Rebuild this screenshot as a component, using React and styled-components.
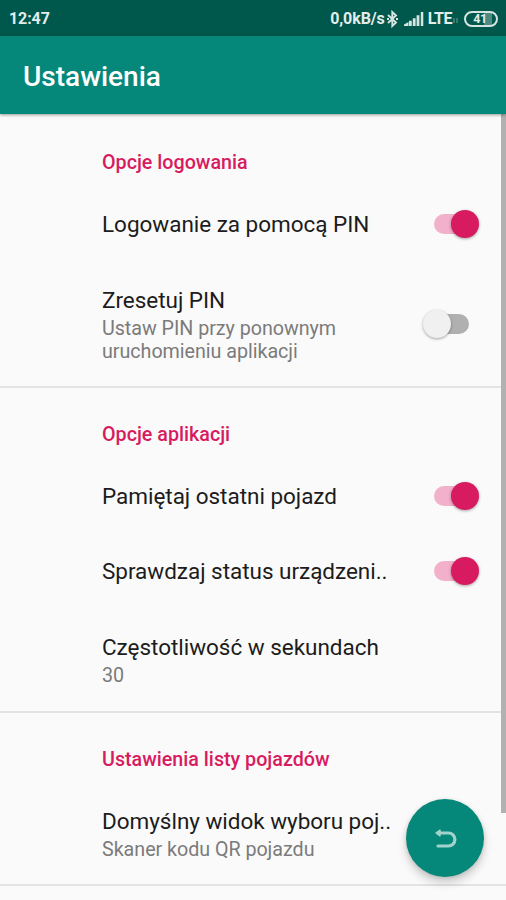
import React from 'react'
import styled, { createGlobalStyle } from "styled-components";

const GlobalStyle = createGlobalStyle`
    * {
        box-sizing: border-box;
    }

    body {
        margin: 0;
        background-color: #fafafa;
        font-family: Roboto, "Noto Sans", sans-serif;
    }
`;

const Screen = styled.div`
    position: relative;
    display: flex;
    flex-direction: column;
    width: 506px;
    height: 900px;
    overflow: hidden;
    background-color: #fafafa;
`;

const StatusBar = styled.div`
    flex: none;
    display: flex;
    align-items: center;
    justify-content: space-between;
    height: 36px;
    padding: 1px 8px 0 9px;
    background-color: #00574b;
    color: #e3eeec;
    font-size: 16px;
    font-weight: 700;
`;

const Clock = styled.span`
    letter-spacing: -0.1px;
`;

const StatusIcons = styled.div`
    display: flex;
    align-items: center;
`;

const Speed = styled.span`
    letter-spacing: -0.1px;
`;

const Network = styled.span`
    margin-left: 3px;
    letter-spacing: -0.5px;
`;

const Battery = styled.div`
    display: flex;
    align-items: center;
    justify-content: center;
    width: 34px;
    height: 16px;
    margin-left: 5px;
    padding-right: 2px;
    border: 2px solid #d5e5e2;
    border-radius: 8px;
    background: linear-gradient(to right, transparent 60%, #4f8a80 60%, #4f8a80 86%, transparent 86%);
    font-size: 12.5px;
    letter-spacing: -0.4px;
`;

const AppBar = styled.header`
    position: relative;
    flex: none;
    display: flex;
    align-items: center;
    height: 78px;
    padding-left: 23px;
    background-color: #058879;
    box-shadow: 0 1px 3px rgba(0, 0, 0, 0.4);
    z-index: 1;
`;

const Title = styled.h1`
    margin: 0;
    margin-top: 3px;
    color: white;
    font-size: 28px;
    font-weight: 500;
    letter-spacing: 0;
`;

const Content = styled.main`
    flex: 1;
    min-height: 0;
    padding-top: 2px;
    overflow: hidden;
`;

const Section = styled.section`
    height: ${props => props.$height}px;
    border-bottom: 2px solid #e3e3e3;
`;

const Category = styled.h2`
    height: 71px;
    margin: 0;
    padding: 35px 0 0 102px;
    color: #d81b60;
    font-size: 19.7px;
    line-height: 24px;
    font-weight: 500;
    letter-spacing: 0;
`;

const Preference = styled.div`
    display: flex;
    align-items: center;
    justify-content: space-between;
    height: ${props => props.$height || 75.3}px;
    padding: 0 27px 0 102px;
`;

const PreferenceName = styled.div`
    margin-bottom: 1px;
    color: #1c1c1c;
    font-size: 22.5px;
    line-height: 30px;
    letter-spacing: -0.03px;
    white-space: nowrap;
`;

const Summary = styled.div`
    margin-top: 2px;
    color: #7b7b7b;
    font-size: 19.7px;
    line-height: 23.5px;
    letter-spacing: -0.03px;
    white-space: pre-line;
`;

const Switch = styled.div`
    position: relative;
    flex: none;
    display: flex;
    align-items: center;
    justify-content: ${props => props.$on ? 'flex-end' : 'flex-start'};
    width: 56px;
    height: 28px;
    margin-top: -1px;

    &::before {
        content: '';
        position: absolute;
        left: 11px;
        top: 4px;
        width: 35px;
        height: 20px;
        border-radius: 10px;
        background-color: ${props => props.$on ? '#f2b0ca' : '#b0b0b0'};
    }
`;

const Thumb = styled.div`
    position: relative;
    width: 28px;
    height: 28px;
    border-radius: 50%;
    background-color: ${props => props.$on ? '#d81b60' : '#f0f0f0'};
    box-shadow: 0 1px 3px rgba(0, 0, 0, 0.35);
`;

const ScrollBar = styled.div`
    position: absolute;
    top: 114px;
    right: 0;
    width: 5px;
    height: 699px;
    background-color: #b1b1b1;
`;

const BackButton = styled.button`
    position: absolute;
    left: 406px;
    top: 799px;
    display: flex;
    align-items: center;
    justify-content: center;
    width: 78px;
    height: 78px;
    padding: 2px 0 0 1px;
    border: none;
    border-radius: 50%;
    background-color: #058879;
    box-shadow: 0 6px 10px rgba(0, 0, 0, 0.18), 0 1px 4px rgba(0, 0, 0, 0.12);
`;

const sections = [
  {
    name: 'Opcje logowania',
    height: 272,
    items: [
      { name: 'Logowanie za pomocą PIN', on: true },
      { name: 'Zresetuj PIN', summary: 'Ustaw PIN przy ponownym\nuruchomieniu aplikacji', on: false, height: 124 },
    ],
  },
  {
    name: 'Opcje aplikacji',
    height: 324.5,
    items: [
      { name: 'Pamiętaj ostatni pojazd', on: true },
      { name: 'Sprawdzaj status urządzeni..', on: true },
      { name: 'Częstotliwość w sekundach', summary: '30', height: 101 },
    ],
  },
  {
    name: 'Ustawienia listy pojazdów',
    height: 173.5,
    items: [
      { name: 'Domyślny widok wyboru poj..', summary: 'Skaner kodu QR pojazdu', height: 101 },
    ],
  },
];

const BluetoothGlyph = styled.svg`
    margin: 0 5px 0 1px;
`;

const BluetoothIcon = () => (
  <BluetoothGlyph width="13" height="18" viewBox="0 0 13 18" fill="none" stroke="#d5e5e2" strokeWidth="1.9">
    <path d="M2 5 L10 12.5 L6.3 16 V2 L10 5.5 L2 13" />
    <path d="M1 9 H3 M10 9 H12" />
  </BluetoothGlyph>
);

const SignalIcon = () => (
  <svg width="21" height="16" viewBox="0 0 21 16" fill="#d5e5e2">
    <path d="M0 15 V13.5 L4.5 11 V15 Z M5 9.8 H7.8 V15 H5 Z M8.8 7.3 H11.6 V15 H8.8 Z M12.6 4.3 H15.4 V15 H12.6 Z M16.8 1 H19.3 V15 H16.8 Z" />
  </svg>
);

const DataIcon = () => (
  <svg width="7" height="8" viewBox="0 0 7 8" fill="none" stroke="#4b8a80" strokeWidth="1.4">
    <path d="M2 3 V8 M5 3 V8" />
  </svg>
);

const ReturnIcon = () => (
  <svg width="24" height="22" viewBox="0 0 24 22" fill="none" stroke="#a1d2cb" strokeWidth="3.2" strokeLinecap="round" strokeLinejoin="round">
    <path d="M5 5 H14.5 A6.4 6.5 0 0 1 14.5 18 H4" />
    <path d="M2 5 L6 2.2 V7.8 Z" fill="#a1d2cb" strokeWidth="1.5" />
  </svg>
);

const App = () => {
  return (
    <Screen>
        <GlobalStyle />
        <StatusBar>
            <Clock>12:47</Clock>
            <StatusIcons>
                <Speed>0,0kB/s</Speed>
                <BluetoothIcon />
                <SignalIcon />
                <Network>LTE</Network>
                <DataIcon />
                <Battery>41</Battery>
            </StatusIcons>
        </StatusBar>
        <AppBar>
            <Title>Ustawienia</Title>
        </AppBar>
        <Content>
            {sections.map(section => (
                <Section key={section.name} $height={section.height}>
                    <Category>{section.name}</Category>
                    {section.items.map(item => (
                        <Preference key={item.name} $height={item.height}>
                            <div>
                                <PreferenceName>{item.name}</PreferenceName>
                                {item.summary && <Summary>{item.summary}</Summary>}
                            </div>
                            {item.on !== undefined && (
                                <Switch $on={item.on}>
                                    <Thumb $on={item.on} />
                                </Switch>
                            )}
                        </Preference>
                    ))}
                </Section>
            ))}
        </Content>
        <ScrollBar />
        <BackButton aria-label="Wstecz">
            <ReturnIcon />
        </BackButton>
    </Screen>
  );
}

export default App
